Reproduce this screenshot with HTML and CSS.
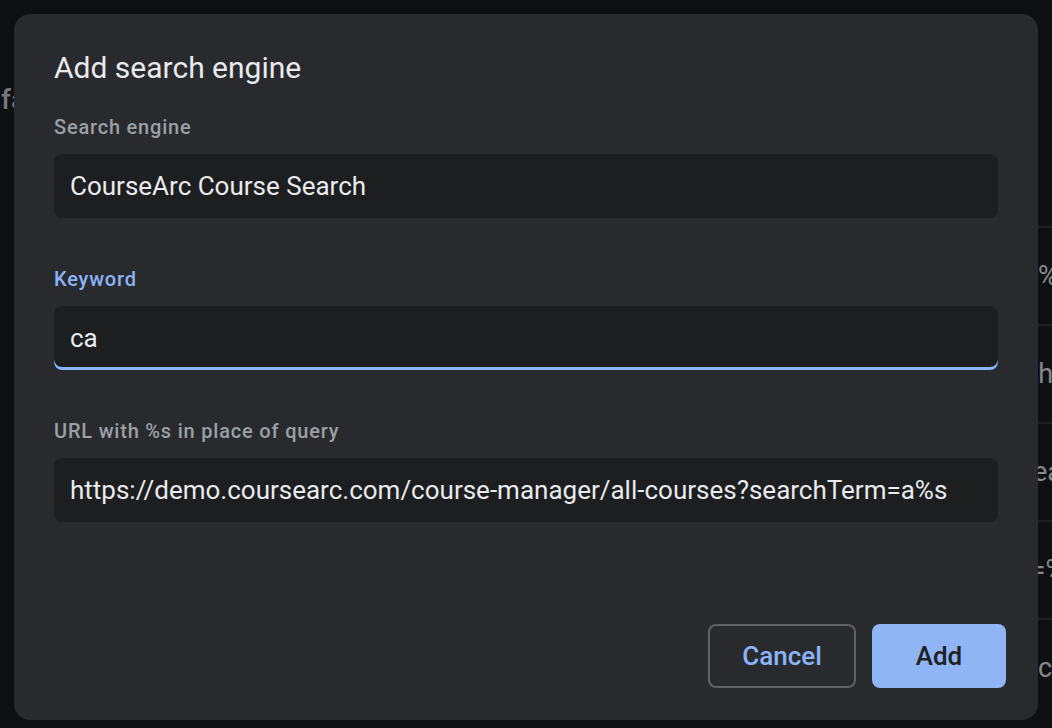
FILE: index.html
```html
<!DOCTYPE html>
<html lang="en">
<head>
<meta charset="utf-8">
<title>Add search engine</title>
<link rel="stylesheet" href="styles.css">
</head>
<body>
<div class="page">
  <div class="backdrop">
    <div class="bg-heading">fa</div>
    <div class="bg-table">
      <div class="bg-row"><span class="bg-text">s%</span></div>
      <div class="bg-row"><span class="bg-text">ch</span></div>
      <div class="bg-row"><span class="bg-text">rea</span></div>
      <div class="bg-row"><span class="bg-text">l=%</span></div>
      <div class="bg-row"><span class="bg-text">scl</span></div>
    </div>
  </div>

  <div class="dialog" role="dialog" aria-labelledby="dlg-title">
    <div class="dialog-body">
      <h1 class="dialog-title" id="dlg-title">Add search engine</h1>

      <div class="field">
        <div class="field-label">Search engine</div>
        <div class="field-input">CourseArc Course Search</div>
      </div>

      <div class="field">
        <div class="field-label field-label-focused">Keyword</div>
        <div class="field-input field-input-focused">ca</div>
      </div>

      <div class="field">
        <div class="field-label">URL with %s in place of query</div>
        <div class="field-input">https://demo.coursearc.com/course-manager/all-courses?searchTerm=a%s</div>
      </div>
    </div>

    <div class="dialog-actions">
      <button class="btn btn-cancel" type="button">Cancel</button>
      <button class="btn btn-add" type="button">Add</button>
    </div>
  </div>
</div>
</body>
</html>
```

FILE: styles.css
```css
html, body {
  margin: 0;
  padding: 0;
  background: #0f1012;
}

body {
  font-family: Roboto, "Liberation Sans", Arial, sans-serif;
}

.page {
  position: relative;
  width: 1052px;
  height: 728px;
  overflow: hidden;
  background: #0f1012;
}

/* Page content behind the modal */
.backdrop {
  width: 100%;
}

.bg-heading {
  padding-top: 84px;
  padding-left: 1px;
  font-size: 28px;
  line-height: 32px;
  font-weight: 500;
  color: #75787c;
  white-space: nowrap;
}

.bg-table {
  margin-top: 110px;
  margin-left: 40px;
}

.bg-row {
  height: 96px;
  border-top: 2px solid #1e1f22;
  padding-left: 984px;
  font-size: 27px;
  line-height: 96px;
  color: #85888d;
  white-space: nowrap;
}

/* Dialog */
.dialog {
  position: absolute;
  left: 14px;
  top: 14px;
  width: 1024px;
  height: 706px;
  box-sizing: border-box;
  padding: 39px 32px 32px 40px;
  background: #292a2d;
  border-radius: 16px;
  display: flex;
  flex-direction: column;
}

.dialog-body {
  padding-right: 8px;
}

.dialog-title {
  margin: 0 0 32px;
  font-size: 30px;
  line-height: 30px;
  font-weight: 400;
  color: #e8eaed;
}

.field {
  margin-bottom: 49px;
}

.field:last-child {
  margin-bottom: 0;
}

.field-label {
  font-size: 20px;
  line-height: 24px;
  font-weight: 500;
  letter-spacing: 0.8px;
  color: #9aa0a6;
  margin-bottom: 15px;
}

.field-label-focused {
  color: #8ab4f8;
}

.field-input {
  height: 64px;
  box-sizing: border-box;
  padding-left: 16px;
  background: #1d1e20;
  border-radius: 8px;
  font-size: 26px;
  line-height: 64px;
  color: #e8eaed;
  white-space: nowrap;
  overflow: hidden;
}

.field-input-focused {
  box-shadow: inset 0 -3px 0 #8ab4f8;
}

.dialog-actions {
  margin-top: auto;
  display: flex;
  justify-content: flex-end;
  gap: 16px;
}

.btn {
  height: 64px;
  box-sizing: border-box;
  border-radius: 8px;
  font-family: Roboto, "Liberation Sans", Arial, sans-serif;
  font-size: 26px;
  font-weight: 500;
  padding: 0;
  margin: 0;
  cursor: pointer;
}

.btn-cancel {
  width: 148px;
  background: transparent;
  border: 2px solid #5f6368;
  color: #8ab4f8;
}

.btn-add {
  width: 134px;
  background: #8fb5f5;
  border: none;
  color: #202124;
}
```
